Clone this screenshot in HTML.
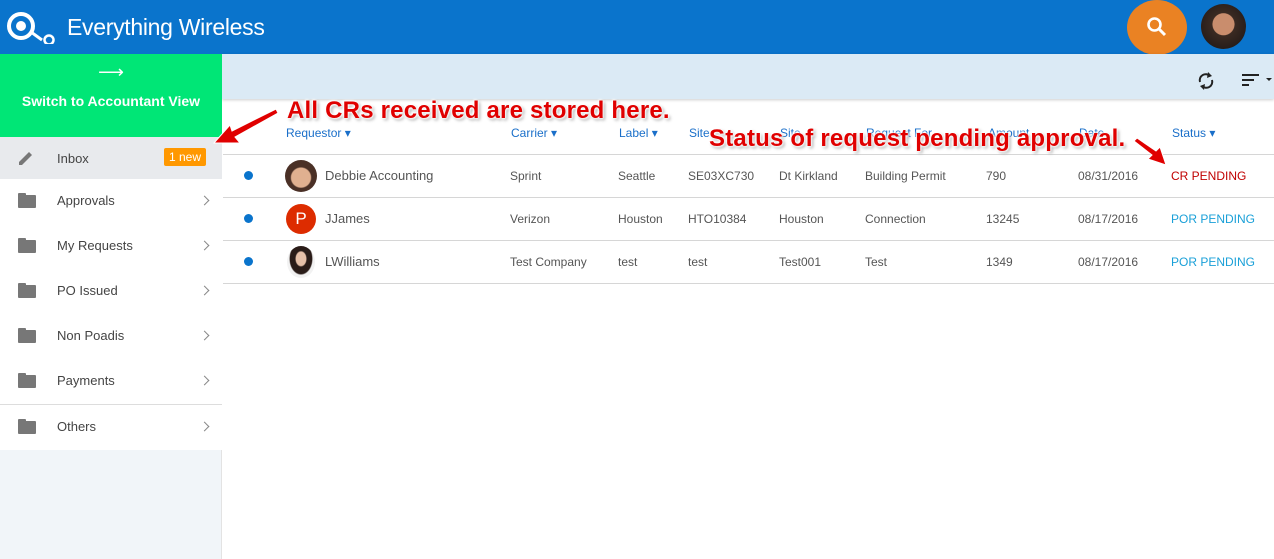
<!DOCTYPE html>
<html><head><meta charset="utf-8"><style>
*{margin:0;padding:0;box-sizing:border-box}
body{width:1274px;height:559px;overflow:hidden;background:#fff;font-family:"Liberation Sans",sans-serif;position:relative}
.a{position:absolute}
.hdr{left:0;top:0;width:1274px;height:54px;background:#0a74cc}
.side{left:0;top:54px;width:222px;height:505px;background:#f1f5f9;border-right:1px solid #e3e3e3}
.item{position:absolute;left:0;width:222px;height:45px;background:#fff;font-size:13px;color:#444}
.item .t{position:absolute;left:57px;top:14px}
.item .f{position:absolute;left:18px;top:16px;width:18px;height:13px;background:#777;border-radius:1px}
.item .f:before{content:"";position:absolute;left:0;top:-2px;width:8px;height:3px;background:#777;border-radius:1px 1px 0 0}
.item .c{position:absolute;left:201px;top:18px;width:7px;height:7px;border-right:1.6px solid #888;border-top:1.6px solid #888;transform:rotate(45deg)}
.th{position:absolute;top:126px;font-size:12px;color:#1a6fc9}
.td{position:absolute;font-size:12px;color:#555}
.hl{position:absolute;left:223px;width:1051px;height:1px;background:#d6d6d6}
.dot{position:absolute;left:244px;width:9px;height:9px;border-radius:50%;background:#0a74cc}
.ann{position:absolute;font-weight:bold;font-size:24px;color:#e00000;text-shadow:0 0 2px #fff,1px 1px 2px #fff,-1px -1px 2px #fff,2px 2px 3px #999;letter-spacing:0.2px}
</style></head><body>
<div class="a hdr"></div>
<svg class="a" style="left:6px;top:10px" width="50" height="34" viewBox="0 0 50 34"><circle cx="15" cy="16" r="12" fill="none" stroke="#fff" stroke-width="4"/><circle cx="15" cy="16" r="5" fill="#fff"/><path d="M25 22 L36 30" stroke="#fff" stroke-width="3"/><circle cx="43" cy="30" r="4.5" fill="none" stroke="#fff" stroke-width="2.5"/></svg>
<div class="a" style="left:67px;top:14px;font-size:23px;color:#fff;letter-spacing:-0.3px">Everything Wireless</div>
<div class="a" style="left:1127px;top:0;width:60px;height:55px;border-radius:50%;background:#ea8223"></div>
<svg class="a" style="left:1145px;top:15px" width="24" height="24" viewBox="0 0 24 24"><circle cx="9.5" cy="9.5" r="6" fill="none" stroke="#fff" stroke-width="2.6"/><path d="M14 14 L20 20" stroke="#fff" stroke-width="3"/></svg>
<div class="a" style="left:1201px;top:4px;width:45px;height:45px;border-radius:50%;background:radial-gradient(circle at 50% 45%,#c98d6d 0 32%,#3a2a22 34%,#1a1414 100%)"></div>
<div class="a" style="left:222px;top:54px;width:1052px;height:45px;background:#dbeaf5;box-shadow:0 1px 3px rgba(0,0,0,.2)"></div>
<svg class="a" style="left:1196px;top:70px" width="20" height="22" viewBox="0 0 20 22"><path d="M4 12 A6 6 0 0 1 14 6" fill="none" stroke="#222" stroke-width="2"/><path d="M12 2 L16 6 L11 8Z" fill="#222"/><path d="M16 10 A6 6 0 0 1 6 16" fill="none" stroke="#222" stroke-width="2"/><path d="M8 20 L4 16 L9 14Z" fill="#222"/></svg>
<div class="a" style="left:1242px;top:74px;width:17px;height:2px;background:#222"></div>
<div class="a" style="left:1242px;top:79px;width:12px;height:2px;background:#222"></div>
<div class="a" style="left:1242px;top:84px;width:7px;height:2px;background:#222"></div>
<div class="a" style="left:1266px;top:78px;border:3px solid transparent;border-top:3px solid #222"></div>
<div class="a side"></div>
<div class="a" style="left:0;top:54px;width:222px;height:83px;background:#00e676;color:#fff;text-align:center;font-size:14px;font-weight:bold"><div style="margin-top:8px;font-size:18px;font-weight:normal">⟶</div><div style="margin-top:10px">Switch to Accountant View</div></div>
<div class="item" style="top:137px;height:42px;background:#e8eaed"><svg style="position:absolute;left:18px;top:13px" width="16" height="16" viewBox="0 0 16 16"><path d="M1 15 L1 12 L11 2 L14 5 L4 15Z" fill="#777"/></svg><span class="t" style="top:14px">Inbox</span><span style="position:absolute;left:164px;top:11px;background:#ff9800;color:#fff;padding:2px 5px;font-size:12px;border-radius:2px">1 new</span></div>
<div class="item" style="top:179px"><div class="f"></div><span class="t">Approvals</span><div class="c"></div></div>
<div class="item" style="top:224px"><div class="f"></div><span class="t">My Requests</span><div class="c"></div></div>
<div class="item" style="top:269px"><div class="f"></div><span class="t">PO Issued</span><div class="c"></div></div>
<div class="item" style="top:314px"><div class="f"></div><span class="t">Non Poadis</span><div class="c"></div></div>
<div class="item" style="top:359px"><div class="f"></div><span class="t">Payments</span><div class="c"></div></div>
<div class="a" style="left:0;top:404px;width:222px;height:1px;background:#ddd"></div>
<div class="item" style="top:405px"><div class="f"></div><span class="t">Others</span><div class="c"></div></div>

<div class="th" style="left:286px">Requestor ▾</div>
<div class="th" style="left:511px">Carrier ▾</div>
<div class="th" style="left:619px">Label ▾</div>
<div class="th" style="left:689px">Site</div>
<div class="th" style="left:780px">Site</div>
<div class="th" style="left:866px">Request For</div>
<div class="th" style="left:988px">Amount</div>
<div class="th" style="left:1079px">Date</div>
<div class="th" style="left:1172px">Status ▾</div>
<div class="hl" style="top:154px"></div>
<div class="hl" style="top:197px"></div>
<div class="hl" style="top:240px"></div>
<div class="hl" style="top:283px"></div>

<div class="dot" style="top:171px"></div>
<div class="a" style="left:285px;top:160px;width:32px;height:32px;border-radius:50%;background:radial-gradient(circle at 50% 55%,#e0b090 0 40%,#4a3026 45%)"></div>
<div class="td" style="left:325px;top:168px;font-size:13px">Debbie Accounting</div>
<div class="td" style="left:510px;top:169px">Sprint</div><div class="td" style="left:618px;top:169px">Seattle</div><div class="td" style="left:688px;top:169px">SE03XC730</div><div class="td" style="left:779px;top:169px">Dt Kirkland</div><div class="td" style="left:865px;top:169px">Building Permit</div><div class="td" style="left:986px;top:169px">790</div><div class="td" style="left:1078px;top:169px">08/31/2016</div><div class="td" style="left:1171px;top:169px;color:#c00000">CR PENDING</div>

<div class="dot" style="top:214px"></div>
<div class="a" style="left:286px;top:204px;width:30px;height:30px;border-radius:50%;background:#dd2c00;color:#fff;font-size:17px;text-align:center;line-height:30px">P</div>
<div class="td" style="left:325px;top:211px;font-size:13px">JJames</div>
<div class="td" style="left:510px;top:212px">Verizon</div><div class="td" style="left:618px;top:212px">Houston</div><div class="td" style="left:688px;top:212px">HTO10384</div><div class="td" style="left:779px;top:212px">Houston</div><div class="td" style="left:865px;top:212px">Connection</div><div class="td" style="left:986px;top:212px">13245</div><div class="td" style="left:1078px;top:212px">08/17/2016</div><div class="td" style="left:1171px;top:212px;color:#1aa0d8">POR PENDING</div>

<div class="dot" style="top:257px"></div>
<div class="a" style="left:287px;top:246px;width:28px;height:32px;border-radius:50%;background:radial-gradient(ellipse at 50% 40%,#e6c0a8 0 25%,#2a1c18 30% 55%,#f2f2f2 60%)"></div>
<div class="td" style="left:325px;top:254px;font-size:13px">LWilliams</div>
<div class="td" style="left:510px;top:255px">Test Company</div><div class="td" style="left:618px;top:255px">test</div><div class="td" style="left:688px;top:255px">test</div><div class="td" style="left:779px;top:255px">Test001</div><div class="td" style="left:865px;top:255px">Test</div><div class="td" style="left:986px;top:255px">1349</div><div class="td" style="left:1078px;top:255px">08/17/2016</div><div class="td" style="left:1171px;top:255px;color:#1aa0d8">POR PENDING</div>

<div class="ann" style="left:287px;top:97px">All CRs received are stored here.</div>
<div class="ann" style="left:709px;top:125px">Status of request pending approval.</div>
<svg class="a" style="left:210px;top:105px" width="70" height="45" viewBox="0 0 70 45"><path d="M66 4 L22 26 L20 20 L4 38 L30 38 L25 32 L68 8Z" fill="#e00000" stroke="#fff" stroke-width="1"/></svg>
<svg class="a" style="left:1130px;top:135px" width="40" height="35" viewBox="0 0 40 35"><path d="M4 6 L22 20 L18 24 L36 30 L30 12 L26 16 L7 3Z" fill="#e00000" stroke="#fff" stroke-width="1"/></svg>
</body></html>
